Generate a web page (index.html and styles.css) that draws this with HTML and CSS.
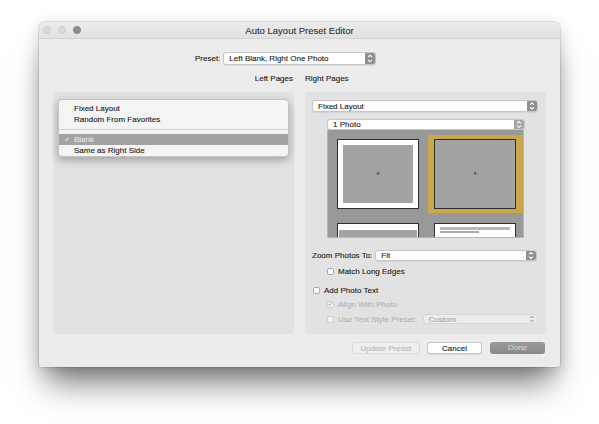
FILE: index.html
```html
<!DOCTYPE html>
<html>
<head>
<meta charset="utf-8">
<link rel="stylesheet" href="styles.css">
</head>
<body>
<div class="window">
  <div class="titlebar">
    <div class="lights"><span class="light"></span><span class="light"></span><span class="light dark"></span></div>
    <div class="title">Auto Layout Preset Editor</div>
    <div></div>
  </div>
  <div class="content">
    <div class="preset-row">
      <span class="label">Preset:</span>
      <div class="select preset-select">
        <span class="select-text">Left Blank, Right One Photo</span>
        <span class="stepper"><svg viewBox="0 0 10 13" width="10" height="13"><path d="M3 5.2 L5 3.2 L7 5.2 M3 7.8 L5 9.8 L7 7.8" fill="none" stroke="#fff" stroke-width="1.1"/></svg></span>
      </div>
    </div>
    <div class="heads">
      <div class="head head-left">Left Pages</div>
      <div class="head head-right">Right Pages</div>
    </div>
    <div class="panels">
      <div class="panel left-panel">
        <div class="menu">
          <div class="menu-item">Fixed Layout</div>
          <div class="menu-item">Random From Favorites</div>
          <div class="menu-sep"></div>
          <div class="menu-item selected"><span class="check">✓</span>Blank</div>
          <div class="menu-item">Same as Right Side</div>
        </div>
      </div>
      <div class="panel right-panel">
        <div class="select fixed-select">
          <span class="select-text">Fixed Layout</span>
          <span class="stepper"><svg viewBox="0 0 10 12" width="10" height="12"><path d="M3 4.8 L5 2.8 L7 4.8 M3 7.2 L5 9.2 L7 7.2" fill="none" stroke="#fff" stroke-width="1.1"/></svg></span>
        </div>
        <div class="photo-block">
          <div class="select photo-select">
            <span class="select-text">1 Photo</span>
            <span class="stepper light-step"><svg viewBox="0 0 10 11" width="10" height="11"><path d="M3 4.3 L5 2.5 L7 4.3 M3 6.7 L5 8.5 L7 6.7" fill="none" stroke="#fff" stroke-width="1.1"/></svg></span>
          </div>
          <div class="grid">
            <div class="cell"><div class="page framed"><div class="slot"><span class="plus">+</span></div></div></div>
            <div class="cell chosen"><div class="page"><div class="slot"><span class="plus">+</span></div></div></div>
            <div class="cell"><div class="page framed top-only"><div class="slot"></div></div></div>
            <div class="cell"><div class="page textpage"><div class="tline long"></div><div class="tline short"></div></div></div>
          </div>
        </div>
        <div class="zoom-row">
          <span class="label">Zoom Photos To:</span>
          <div class="select zoom-select">
            <span class="select-text">Fit</span>
            <span class="stepper"><svg viewBox="0 0 10 11" width="10" height="11"><path d="M3 4.3 L5 2.5 L7 4.3 M3 6.7 L5 8.5 L7 6.7" fill="none" stroke="#fff" stroke-width="1.1"/></svg></span>
          </div>
        </div>
        <div class="check-row indent match-row"><span class="box"></span><span class="label">Match Long Edges</span></div>
        <div class="check-row add-row"><span class="box"></span><span class="label">Add Photo Text</span></div>
        <div class="check-row indent align-row disabled"><span class="box checked">✓</span><span class="label">Align With Photo</span></div>
        <div class="check-row indent style-row disabled">
          <span class="box"></span><span class="label">Use Text Style Preset:</span>
          <div class="select custom-select">
            <span class="select-text">Custom</span>
            <span class="stepper plain-step"><svg viewBox="0 0 10 10" width="10" height="10"><path d="M3 4 L5 2.2 L7 4 M3 6 L5 7.8 L7 6" fill="none" stroke="#9a9a9a" stroke-width="1"/></svg></span>
          </div>
        </div>
      </div>
    </div>
    <div class="buttons">
      <div class="btn btn-update">Update Preset</div>
      <div class="btn btn-cancel">Cancel</div>
      <div class="btn btn-done">Done</div>
    </div>
  </div>
</div>
</body>
</html>
```
FILE: styles.css
```css
* { box-sizing: border-box; }
html, body { margin: 0; }
body {
  width: 599px;
  height: 424px;
  overflow: hidden;
  background: #ffffff;
  padding: 22px 0 0 39px;
  font-family: "Liberation Sans", Arial, sans-serif;
  font-size: 8px;
  color: #222;
  -webkit-text-stroke: 0.12px currentColor;
}
.window {
  width: 521px;
  height: 345px;
  background: #ececec;
  border-radius: 5px 5px 2px 2px;
  box-shadow: 0 24px 30px -8px rgba(0,0,0,0.5), 0 4px 16px rgba(0,0,0,0.16), 0 0 0 0.5px rgba(0,0,0,0.2);
}
.titlebar {
  height: 17px;
  display: grid;
  grid-template-columns: 1fr auto 1fr;
  align-items: center;
  background: linear-gradient(#ebebeb, #e2e2e2);
  border-bottom: 1px solid #d3d3d3;
  border-radius: 5px 5px 0 0;
}
.lights { display: flex; gap: 7px; padding-left: 4px; }
.light { width: 8px; height: 8px; border-radius: 50%; background: #d9d9d9; border: 0.5px solid #cfcfcf; }
.light.dark { background: #8d8d8d; border-color: #858585; }
.title { font-size: 9.5px; color: #333; }
.content { padding: 13px 14px 0 14px; }
.preset-row { display: flex; align-items: center; height: 13px; margin-left: 142px; gap: 3px; }
.select {
  display: flex;
  align-items: center;
  background: #fff;
  border: 0.5px solid #c6c6c6;
  border-radius: 3px;
  box-shadow: 0 0.5px 0.5px rgba(0,0,0,0.12);
  overflow: hidden;
}
.select-text { flex: 1; padding-left: 5px; white-space: nowrap; }
.stepper { display: flex; align-items: center; justify-content: center; width: 10px; align-self: stretch; background: #8f8f8f; }
.stepper.light-step { background: #a6a6a6; }
.stepper.plain-step { background: transparent; }
.preset-select { width: 153px; height: 13px; }
.heads { display: flex; gap: 11px; margin-top: 9px; height: 10px; line-height: 10px; }
.head { width: 241px; }
.head-left { text-align: right; padding-right: 1px; }
.panels { display: flex; gap: 11px; margin-top: 8px; height: 242px; }
.panel { width: 241px; background: #e2e2e2; border-radius: 3px; }
.left-panel { position: relative; }
.menu {
  position: absolute;
  left: 5px;
  top: 7px;
  width: 231px;
  height: 58px;
  background: #f4f4f4;
  border-radius: 4px;
  border: 0.5px solid #c4c4c4;
  box-shadow: 0 3px 8px rgba(0,0,0,0.3);
  padding: 3px 0 2px 0;
}
.menu-item { height: 11px; line-height: 11px; padding-left: 15px; position: relative; color: #222; }
.menu-item.selected { background: #a3a3a3; color: #e6e6e6; }
.check { position: absolute; left: 5px; top: 0; font-size: 7px; }
.menu-sep { height: 9px; position: relative; }
.menu-sep::after { content: ""; display: block; position: absolute; left: 0; right: 0; top: 4px; border-top: 1px solid #d6d6d6; }
.right-panel { padding-top: 8px; }
.fixed-select { margin: 0 8px 0 7px; height: 12px; }
.photo-block { margin: 7px 0 0 22px; width: 198px; }
.photo-select { height: 11px; }
.grid {
  width: 197px;
  height: 108px;
  background: #999999;
  overflow: hidden;
  display: grid;
  grid-template-columns: 95px 95px;
  column-gap: 2px;
  row-gap: 6px;
  padding: 5px 0 0 3px;
  border: 0.5px solid #b5b5b5;
  border-top: 0;
}
.cell { padding: 4px 7px 4px 6px; height: 78px; }
.cell.chosen { background: #c8a74e; }
.page { width: 82px; height: 70px; border: 1px solid #2e2e2e; background: #a3a3a3; display: flex; flex-direction: column; }
.page.framed { background: #fff; padding: 5px; }
.page.framed.top-only { padding: 6px 1px 0 1px; }
.slot { flex: 1; background: #a3a3a3; display: flex; align-items: center; justify-content: center; }
.plus { color: #3a3a3a; font-size: 8px; line-height: 8px; }
.page.textpage { background: #fff; padding: 3px 5px; gap: 1px; }
.tline { height: 3px; background: #b8b8b8; }
.tline.long { width: 100%; }
.tline.short { width: 55%; background: #a8a8a8; height: 2px; }
.zoom-row { display: flex; align-items: center; gap: 2px; margin-top: 12px; height: 11px; padding-left: 7px; }
.zoom-select { width: 162px; height: 11px; margin-left: 1px; }
.check-row { display: flex; align-items: center; gap: 4px; height: 10px; }
.check-row.indent { padding-left: 22px; }
.match-row { margin-top: 5px; }
.add-row { margin-top: 9px; padding-left: 8px; }
.align-row { margin-top: 4px; }
.style-row { margin-top: 5px; padding-right: 8px; }
.box { width: 7px; height: 7px; background: #fff; border: 0.5px solid #a9a9a9; border-radius: 2px; display: flex; align-items: center; justify-content: center; font-size: 6px; line-height: 6px; color: #9a9a9a; flex: none; }
.disabled .label { color: #b3b3b3; }
.disabled .box { border-color: #cfcfcf; background: #f1f1f1; }
.custom-select { flex: 1; height: 10px; margin-left: 2px; background: #ececec; border-color: #d6d6d6; box-shadow: none; }
.custom-select .select-text { color: #a9a9a9; }
.buttons { display: flex; justify-content: flex-end; margin-top: 8px; padding-right: 1px; height: 12px; }
.btn { height: 12px; line-height: 12px; border-radius: 3px; text-align: center; }
.btn-update { width: 68px; background: #efefef; border: 0.5px solid #dadada; color: #b8b8b8; }
.btn-cancel { width: 55px; margin-left: 7px; background: #fff; border: 0.5px solid #c8c8c8; box-shadow: 0 0.5px 0.5px rgba(0,0,0,0.15); color: #222; }
.btn-done { width: 55px; margin-left: 8px; background: linear-gradient(#9b9b9b, #8a8a8a); color: #d4d4d4; }
```
